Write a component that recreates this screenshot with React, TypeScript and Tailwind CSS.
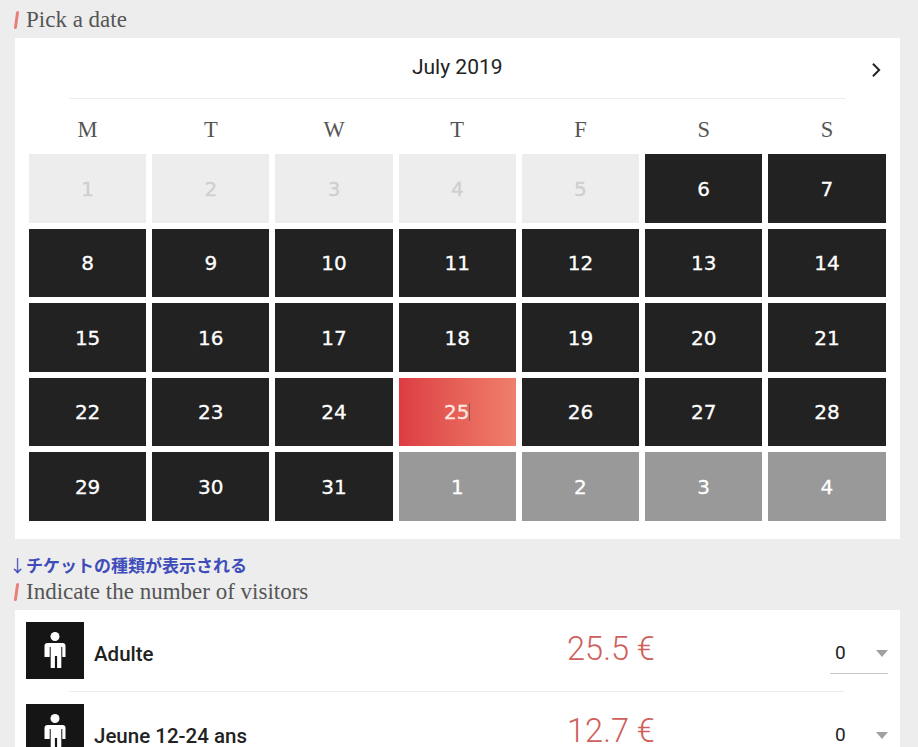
const slab = "font-['Liberation_Serif','DejaVu_Serif',serif]";

const prev = [1, 2, 3, 4, 5];
const month = Array.from({ length: 26 }, (_, i) => i + 6);
const next = [1, 2, 3, 4];

function Heading({ children }: { children: string }) {
  return (
    <div className="flex h-[24px] items-center pl-[15px]">
      <span className="h-[18px] w-[3px] skew-x-[-8deg] rounded-full bg-[#e8807a]" />
      <span className={`ml-[8px] text-[23px] leading-[24px] text-[#555] ${slab}`}>{children}</span>
    </div>
  );
}

function Day({ n, kind }: { n: number; kind: "off" | "on" | "sel" | "next" }) {
  const styles = {
    off: "bg-[#ededed] text-[#cfcfcf]",
    on: "bg-[#222222] text-white",
    sel: "bg-gradient-to-r from-[#dc3c43] to-[#ef7f6c] text-[#fde6e0]",
    next: "bg-[#999999] text-white",
  };
  return (
    <div className={`flex h-[68.5px] items-center justify-center pt-[1px] text-[20px] [-webkit-text-stroke:0.3px_currentColor] font-['DejaVu_Sans',sans-serif] ${styles[kind]}`}>
      {n}
      {kind === "sel" && <span className="h-[18px] w-px bg-[#8a5a5a]" />}
    </div>
  );
}

function Person() {
  return (
    <svg viewBox="0 0 22 36" className="h-[36px] w-[22px]" fill="white">
      <circle cx="11" cy="4.5" r="4.5" />
      <path d="M3.5 11h15a3 3 0 0 1 3 3v11h-3.2V15h-1v21h-4.2V24h-2.2v12H6.7V15h-1v10H.5V14a3 3 0 0 1 3-3z" />
    </svg>
  );
}

function Ticket({ name, price }: { name: string; price: string }) {
  return (
    <div className="flex items-center pl-[11px] pr-[12px]">
      <div className="flex h-[57px] w-[58px] shrink-0 items-center justify-center bg-[#151515]">
        <Person />
      </div>
      <div className="ml-[10px] w-[340px] pt-[8px] text-[20.5px] font-medium text-[#222] font-['Roboto',sans-serif]">{name}</div>
      <div className="w-[300px] pb-[2px] pl-[54px] text-center text-[32.5px] font-light leading-[30px] text-[#cf5f5c] font-['Roboto',sans-serif]">
        {price}
      </div>
      <div className="ml-auto flex h-[48px] w-[58px] items-center justify-between border-b border-[#c8c8c8] pl-[5px] pt-[8px] text-[19px] text-[#222] font-['Roboto',sans-serif]">
        0
        <span className="h-0 w-0 border-x-[6px] border-t-[7px] border-x-transparent border-t-[#a0a0a0]" />
      </div>
    </div>
  );
}

export default function App() {
  return (
    <div className="h-[747px] overflow-hidden bg-[#ededed] pt-[8px]">
      <Heading>Pick a date</Heading>

      <div className="mx-[15px] mt-[6px] w-[885px] bg-white pb-[18px] pl-[14px] pr-[14.5px]">
        <div className="relative mx-[40px] flex h-[61px] items-center justify-center border-b border-[#ececec] text-[21px] text-[#222] font-['Roboto',sans-serif]">
          July 2019
          <svg viewBox="0 0 12 18" className="absolute right-[-36px] top-[24px] h-[16px] w-[11px]" fill="none" stroke="#222" strokeWidth="2.2">
            <path d="M2 2l7 7-7 7" />
          </svg>
        </div>
        <div className={`grid h-[55px] grid-cols-7 items-center gap-[6px] pt-[6px] text-center text-[22.5px] text-[#555] ${slab}`}>
          {["M", "T", "W", "T", "F", "S", "S"].map((d, i) => (
            <div key={i}>{d}</div>
          ))}
        </div>
        <div className="grid grid-cols-7 gap-[6px]">
          {prev.map((n) => <Day key={"p" + n} n={n} kind="off" />)}
          {month.map((n) => <Day key={n} n={n} kind={n === 25 ? "sel" : "on"} />)}
          {next.map((n) => <Day key={"n" + n} n={n} kind="next" />)}
        </div>
      </div>

      <div className="mt-[14px] h-[24px] pl-[9px] text-[17px] font-bold leading-[24px] text-[#3f4dbb] font-['Noto_Sans_CJK_JP',sans-serif]">
        <span className="font-normal">↓</span>チケットの種類が表示される
      </div>
      <div className="pt-[3px]">
        <Heading>Indicate the number of visitors</Heading>
      </div>

      <div className="mx-[15px] mt-[6px] w-[885px] bg-white pt-[12px]">
        <Ticket name="Adulte" price="25.5 €" />
        <div className="mb-[12px] ml-[54px] mr-[56px] mt-[12px] border-t border-[#ececec]" />
        <Ticket name="Jeune 12-24 ans" price="12.7 €" />
      </div>
    </div>
  );
}
